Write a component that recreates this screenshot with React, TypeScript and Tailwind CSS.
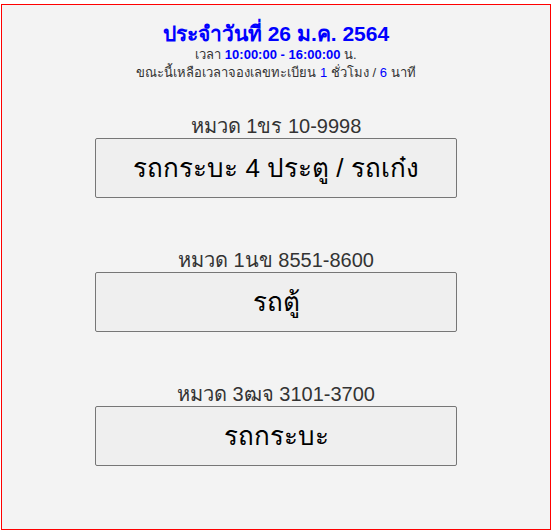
import React from "react"

const groups = [
  { label: "หมวด 1ขร 10-9998", name: "รถกระบะ 4 ประตู / รถเก๋ง" },
  { label: "หมวด 1นข 8551-8600", name: "รถตู้" },
  { label: "หมวด 3ฒจ 3101-3700", name: "รถกระบะ" },
]

export default function App() {
  return (
    <div className="min-h-[532px] bg-white pt-[4px] pl-[1px] font-['Liberation_Sans','Noto_Sans',sans-serif]">
      <div className="w-[550px] h-[526px] border border-[#ff0000] bg-[#f3f3f3] flex flex-col items-center">
        <div className="mt-[17px] text-center">
          <div className="text-[21px] leading-[24px] font-bold text-[#0000ff]">ประจำวันที่ 26 ม.ค. 2564</div>
          <div className="text-[13px] leading-[18px] text-[#333]">
            เวลา <span className="font-bold text-[#0000ff]">10:00:00 - 16:00:00</span> น.
          </div>
          <div className="text-[13px] leading-[18px] text-[#333]">
            ขณะนี้เหลือเวลาจองเลขทะเบียน <span className="text-[#0000ff]">1</span> ชั่วโมง / <span className="text-[#0000ff]">6</span> นาที
          </div>
        </div>
        <div className="mt-[32px] flex flex-col gap-[50px]">
          {groups.map((g) => (
            <div key={g.label} className="flex flex-col items-center">
              <div className="text-[20px] leading-[24px] text-[#333]">{g.label}</div>
              <button className="w-[362px] h-[60px] rounded-[2px] border border-[#767676] bg-[#efefef] text-[26px] text-black">
                {g.name}
              </button>
            </div>
          ))}
        </div>
      </div>
    </div>
  )
}
